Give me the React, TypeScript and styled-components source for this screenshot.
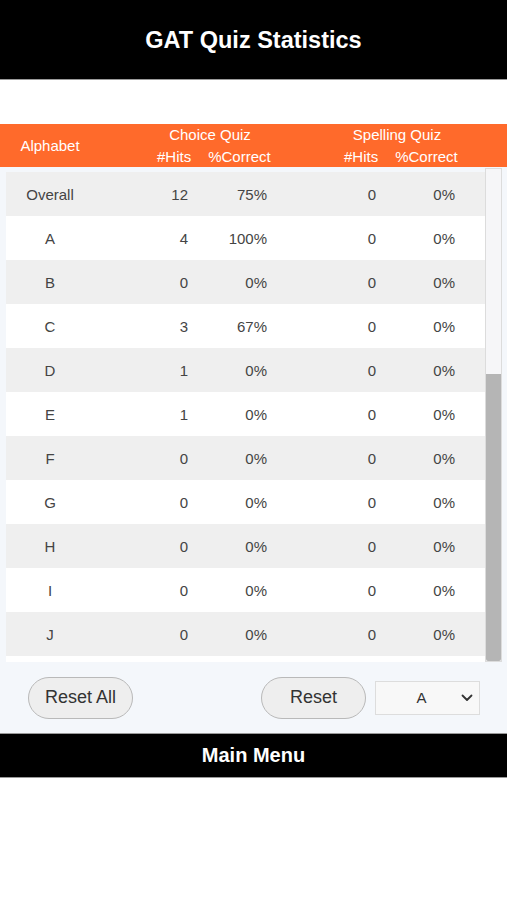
import React from "react";
import styled, { createGlobalStyle } from "styled-components";

const GlobalStyle = createGlobalStyle`
  html, body { margin: 0; padding: 0; background: #ffffff; }
  body { font-family: "Liberation Sans", Arial, Helvetica, sans-serif; }
  * { box-sizing: border-box; }
`;

const Page = styled.div`
  width: 507px;
  display: flex;
  flex-direction: column;
`;

const TopBar = styled.header`
  height: 80px;
  background: #000;
  border-bottom: 1px solid #9a9a9a;
  display: flex;
  align-items: center;
  justify-content: center;
  padding-top: 2px;
`;

const Title = styled.h1`
  margin: 0;
  color: #fff;
  font-size: 23.5px;
  font-weight: 700;
`;

const Spacer = styled.div`
  height: 44px;
  background: #fff;
`;

const HeadBar = styled.div`
  height: 43px;
  background: #ff6a2b;
  color: #fff;
  display: flex;
  align-items: center;
  font-size: 15px;
`;

const AlphaHead = styled.div`
  width: 100px;
  text-align: center;
`;

const Group = styled.div<{ $ml: number }>`
  width: 130px;
  margin-left: ${(p) => p.$ml}px;
  display: flex;
  flex-direction: column;
  line-height: 22px;
`;

const GroupTitle = styled.div`
  text-align: center;
`;

const SubRow = styled.div`
  display: flex;
  gap: 17px;
  padding-left: 12px;
`;

const Panel = styled.div`
  background: #f4f7fb;
  display: flex;
  flex-direction: column;
`;

const ListArea = styled.div`
  height: 495px;
  display: flex;
  padding: 1px 5px 0 6px;
`;

const List = styled.div`
  flex: 1;
  overflow: hidden;
  margin-top: 4px;
  background: #ffffff;
  display: flex;
  flex-direction: column;
`;

const Row = styled.div<{ $alt: boolean }>`
  flex: 0 0 44px;
  height: 44px;
  background: ${(p) => (p.$alt ? "#efefef" : "#ffffff")};
  display: grid;
  grid-template-columns: 88px 94px 79px 109px 79px 1fr;
  align-items: center;
  font-size: 15px;
  color: #444;
`;

const NameCell = styled.div`
  text-align: center;
`;

const NumCell = styled.div`
  text-align: right;
`;

const Track = styled.div`
  width: 17px;
  border: 1px solid #dcdcdc;
  background: #f6f6f8;
  display: flex;
  flex-direction: column;
  justify-content: flex-end;
`;

const Thumb = styled.div`
  height: 287px;
  background: #b5b5b5;
  border-radius: 0 0 2px 2px;
`;

const Controls = styled.div`
  height: 71px;
  display: flex;
  align-items: center;
  justify-content: space-between;
  padding: 0 27px 0 28px;
`;

const PillButton = styled.button`
  width: 105px;
  height: 42px;
  border-radius: 21px;
  border: 1px solid #b9b9b9;
  background: #eeeeee;
  color: #333;
  font-family: "Liberation Sans", Arial, sans-serif;
  font-size: 18px;
  padding: 0;
`;

const RightGroup = styled.div`
  display: flex;
  align-items: center;
  gap: 9px;
`;

const SelectBox = styled.div`
  width: 105px;
  height: 34px;
  border: 1px solid #dddddd;
  background: #f8f8f8;
  display: flex;
  align-items: center;
  font-size: 15px;
  color: #333;
`;

const SelectValue = styled.span`
  flex: 1;
  text-align: center;
  padding-left: 6px;
`;

const Chevron = styled.svg`
  width: 12px;
  height: 8px;
  margin-right: 6px;
`;

const BottomBar = styled.footer`
  height: 45px;
  background: #000;
  border-top: 1px solid #999;
  border-bottom: 1px solid #999;
  display: flex;
  align-items: center;
  justify-content: center;
  color: #fff;
  font-size: 20px;
  font-weight: 700;
`;

type Stat = { name: string; ch: number; cp: string; sh: number; sp: string };

const data: Stat[] = [
  { name: "Overall", ch: 12, cp: "75%", sh: 0, sp: "0%" },
  { name: "A", ch: 4, cp: "100%", sh: 0, sp: "0%" },
  { name: "B", ch: 0, cp: "0%", sh: 0, sp: "0%" },
  { name: "C", ch: 3, cp: "67%", sh: 0, sp: "0%" },
  { name: "D", ch: 1, cp: "0%", sh: 0, sp: "0%" },
  { name: "E", ch: 1, cp: "0%", sh: 0, sp: "0%" },
  { name: "F", ch: 0, cp: "0%", sh: 0, sp: "0%" },
  { name: "G", ch: 0, cp: "0%", sh: 0, sp: "0%" },
  { name: "H", ch: 0, cp: "0%", sh: 0, sp: "0%" },
  { name: "I", ch: 0, cp: "0%", sh: 0, sp: "0%" },
  { name: "J", ch: 0, cp: "0%", sh: 0, sp: "0%" },
];

export default function App() {
  return (
    <Page>
      <GlobalStyle />
      <TopBar>
        <Title>GAT Quiz Statistics</Title>
      </TopBar>
      <Spacer />
      <HeadBar>
        <AlphaHead>Alphabet</AlphaHead>
        <Group $ml={45}>
          <GroupTitle>Choice Quiz</GroupTitle>
          <SubRow>
            <span>#Hits</span>
            <span>%Correct</span>
          </SubRow>
        </Group>
        <Group $ml={57}>
          <GroupTitle>Spelling Quiz</GroupTitle>
          <SubRow>
            <span>#Hits</span>
            <span>%Correct</span>
          </SubRow>
        </Group>
      </HeadBar>
      <Panel>
        <ListArea>
          <List>
            {data.map((d, i) => (
              <Row key={d.name} $alt={i % 2 === 0}>
                <NameCell>{d.name}</NameCell>
                <NumCell>{d.ch}</NumCell>
                <NumCell>{d.cp}</NumCell>
                <NumCell>{d.sh}</NumCell>
                <NumCell>{d.sp}</NumCell>
                <div />
              </Row>
            ))}
          </List>
          <Track>
            <Thumb />
          </Track>
        </ListArea>
        <Controls>
          <PillButton>Reset All</PillButton>
          <RightGroup>
            <PillButton>Reset</PillButton>
            <SelectBox>
              <SelectValue>A</SelectValue>
              <Chevron viewBox="0 0 12 8">
                <path d="M1.5 1.5 L6 6 L10.5 1.5" fill="none" stroke="#333" strokeWidth="1.8" strokeLinecap="round" strokeLinejoin="round" />
              </Chevron>
            </SelectBox>
          </RightGroup>
        </Controls>
      </Panel>
      <BottomBar>Main Menu</BottomBar>
    </Page>
  );
}
